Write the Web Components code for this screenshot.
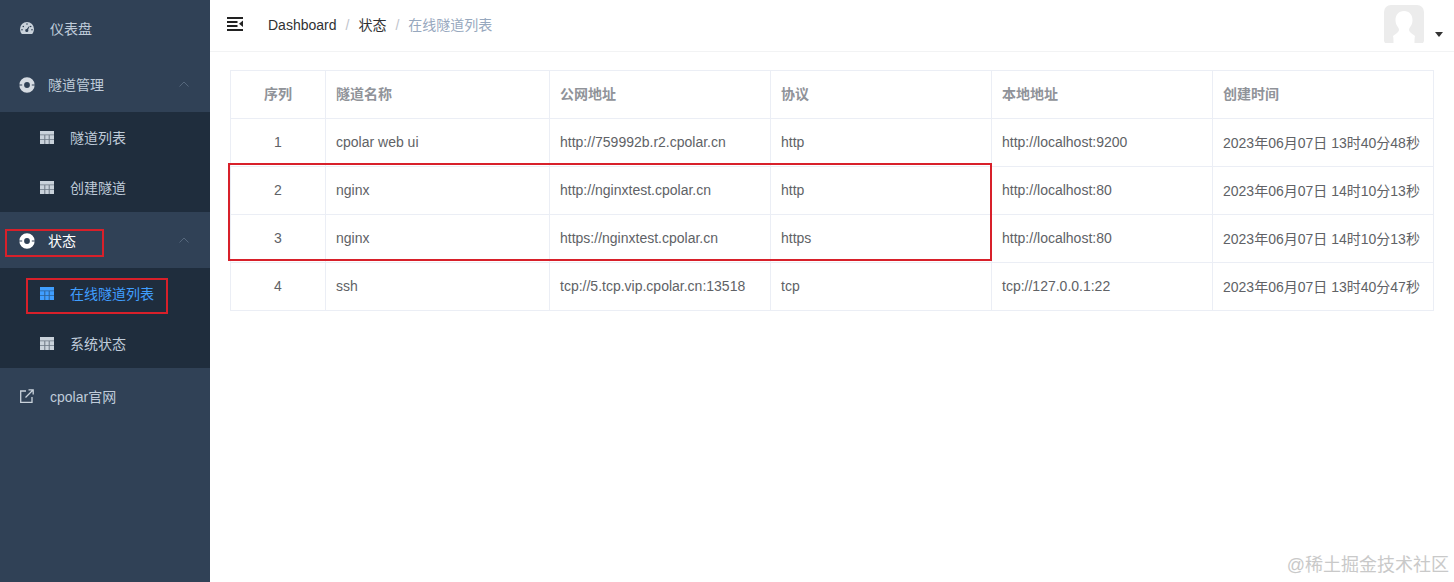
<!DOCTYPE html>
<html lang="zh">
<head>
<meta charset="utf-8">
<title>cpolar</title>
<style>
  html, body { margin: 0; height: 100%; background: #fff; }
  body { font-family: "Liberation Sans", "Noto Sans CJK SC", sans-serif; overflow: hidden; }
</style>
</head>
<body>
<app-shell>
  <side-bar slot="side">
    <side-item icon="gauge" label="仪表盘"></side-item>
    <side-group label="隧道管理">
      <side-item sub icon="grid" label="隧道列表"></side-item>
      <side-item sub icon="grid" label="创建隧道"></side-item>
    </side-group>
    <side-group label="状态" bright>
      <side-item sub active icon="grid" label="在线隧道列表"></side-item>
      <side-item sub icon="grid" label="系统状态"></side-item>
    </side-group>
    <side-item icon="link" label="cpolar官网"></side-item>
  </side-bar>
  <top-bar slot="top"></top-bar>
  <tunnel-table slot="main"></tunnel-table>
  <red-box slot="over" x="228" y="163" w="764" h="98"></red-box>
  <red-box slot="over" x="5" y="229" w="99" h="28"></red-box>
  <red-box slot="over" x="26" y="278" w="142" h="36"></red-box>
  <water-mark slot="over">@稀土掘金技术社区</water-mark>
</app-shell>

<script>
const ICONS = {
	gauge: `<svg width="14" height="12" viewBox="0 0 14 12"><path fill="currentColor" fill-rule="evenodd" d="M7 0a7 7 0 0 1 7 7c0 1.900-.6 3.500-1.600 4.700-.2.200-.4.300-.7.300H2.300c-.3 0-.5-.1-.7-.3A7.300 7.300 0 0 1 0 7a7 7 0 0 1 7-7zM3.300 3.700a.8.800 0 1 0 0 1.600.8.800 0 0 0 0-1.600zM6.200 2a.8.800 0 1 0 1.600 0 .8.800 0 0 0-1.600 0zM10.700 3.700a.8.800 0 1 0 0 1.600.8.800 0 0 0 0-1.600zM2 7a.8.800 0 1 0 0 1.600A.8.800 0 0 0 2 7zM12 7a.8.800 0 1 0 0 1.600.8.800 0 0 0 0-1.600zM9.200 4L6.800 7a1.500 1.500 0 1 0 1.300.8l1.500-3.600z"/></svg>`,
	ring: `<svg width="16" height="16" viewBox="0 0 16 16"><circle cx="8" cy="8" r="5.300" fill="none" stroke="currentColor" stroke-width="4.800"/><path d="M0 7.500h3.200M12.800 7.500H16M0 8.500h3.200M12.800 8.500H16" stroke="#304156" stroke-width=".5"/></svg>`,
	grid: `<svg width="14" height="13" viewBox="0 0 14 13"><path fill="currentColor" d="M0 0h14v13H0z"/><path fill="#1f2d3d" opacity=".55" d="M4.300 4h1v9h-1zM8.700 4h1v9h-1zM0 3.400h14v.8H0zM0 8.200h14v.8H0z"/></svg>`,
	link: `<svg width="14" height="14" viewBox="0 0 14 14" fill="none" stroke="currentColor" stroke-width="1.300"><path d="M6 2H.7v11.300H12V8"/><path d="M5.500 8.500L13 1M8.500.8h4.700v4.700"/></svg>`
};

class AppShell extends HTMLElement {
	constructor() {
		super();
		this.attachShadow({ mode: "open" }).innerHTML = `
		<style>
			:host { display: flex; position: relative; width: 100%; height: 582px; overflow: hidden; }
			.side { flex: 0 0 210px; }
			.right { flex: 1; min-width: 0; }
		</style>
		<div class="side"><slot name="side"></slot></div>
		<div class="right"><slot name="top"></slot><slot name="main"></slot></div>
		<slot name="over"></slot>`;
	}
}

class SideBar extends HTMLElement {
	constructor() {
		super();
		this.attachShadow({ mode: "open" }).innerHTML = `
		<style>
			:host { display: block; height: 582px; background: #304156; overflow: hidden; }
		</style>
		<slot></slot>`;
	}
}

class SideItem extends HTMLElement {
	constructor() {
		super();
		const sub = this.hasAttribute("sub");
		const active = this.hasAttribute("active");
		this.attachShadow({ mode: "open" }).innerHTML = `
		<style>
			:host { display: flex; align-items: center; box-sizing: border-box; font-size: 14px;
				height: ${sub ? 50 : 56}px; padding-left: ${sub ? 40 : 20}px;
				color: ${active ? "#409eff" : "#bfcbd9"}; background: ${sub ? "#1f2d3d" : "transparent"}; }
			.ic { flex: 0 0 30px; display: flex; align-items: center; color: ${active ? "#409eff" : "#c9d2db"}; }
			svg { display: block; }
		</style>
		<span class="ic">${ICONS[this.getAttribute("icon")]}</span>
		<span>${this.getAttribute("label")}</span>`;
	}
}

class SideGroup extends HTMLElement {
	constructor() {
		super();
		const bright = this.hasAttribute("bright");
		this.attachShadow({ mode: "open" }).innerHTML = `
		<style>
			:host { display: block; }
			.head { display: flex; align-items: center; height: 56px; box-sizing: border-box; padding: 0 21px 0 19px;
				font-size: 14px; color: ${bright ? "#fff" : "#bfcbd9"}; }
			.ic { flex: 0 0 29px; display: flex; margin-top: 2px; color: ${bright ? "#fff" : "#d5dbe2"}; }
			.label { flex: 1; }
			.arrow { display: block; }
		</style>
		<div class="head">
			<span class="ic">${ICONS.ring}</span>
			<span class="label">${this.getAttribute("label")}</span>
			<svg class="arrow" width="10" height="6" viewBox="0 0 10 6" fill="none" stroke="#55677c" stroke-width="1"><path d="M.5 5.500L5 1l4.500 4.500"/></svg>
		</div>
		<slot></slot>`;
	}
}

class TopBar extends HTMLElement {
	constructor() {
		super();
		this.attachShadow({ mode: "open" }).innerHTML = `
		<style>
			:host { display: flex; align-items: center; box-sizing: border-box; height: 52px; padding: 0 11px 2px 17px;
				border-bottom: 1px solid #f2f3f4; font-size: 14px; color: #303133; }
			.burger { display: block; margin: 0 25px 2px 0; }
			.crumbs { flex: 1; display: flex; align-items: baseline; margin-bottom: 2px; }
			.sep { color: #c0c4cc; margin: 0 9px; }
			.now { color: #97a8be; }
			.avatar { display: block; margin-top: -1px; }
			.caret { width: 0; height: 0; border: 4px solid transparent; border-top: 5px solid #333; border-bottom: 0; margin: 20px 0 0 11px; }
		</style>
		<svg class="burger" width="16" height="14" viewBox="0 0 16 14" fill="#222"><path d="M0 0h16v2H0zM0 4h10.500v2H0zM0 8h10.500v2H0zM0 12h16v2H0zM16 3.500v6.500l-4-3.200z"/></svg>
		<div class="crumbs">
			<span>Dashboard</span><span class="sep">/</span><span>状态</span><span class="sep">/</span><span class="now">在线隧道列表</span>
		</div>
		<svg class="avatar" width="40" height="38" viewBox="0 0 40 38"><path fill="#ececec" d="M7 0h26a7 7 0 0 1 7 7v29l-1 2H1l-1-2V7a7 7 0 0 1 7-7z"/><path fill="#fff" d="M20 6c5.500 0 8.500 4 8.500 9 0 3-1 5.500-3 8-1 1.500-.5 3.500 1.500 5l4 3c-.5 2-.5 4-.5 7H9.500c0-3 0-5-.5-7l4-3c2-1.500 2.500-3.500 1.500-5-2-2.500-3-5-3-8 0-5 3-9 8.500-9z"/></svg>
		<span class="caret"></span>`;
	}
}

const HEADS = ["序列", "隧道名称", "公网地址", "协议", "本地地址", "创建时间"];
const ROWS = [
	["1", "cpolar web ui", "http://759992b.r2.cpolar.cn", "http", "http://localhost:9200", "2023年06月07日 13时40分48秒"],
	["2", "nginx", "http://nginxtest.cpolar.cn", "http", "http://localhost:80", "2023年06月07日 14时10分13秒"],
	["3", "nginx", "https://nginxtest.cpolar.cn", "https", "http://localhost:80", "2023年06月07日 14时10分13秒"],
	["4", "ssh", "tcp://5.tcp.vip.cpolar.cn:13518", "tcp", "tcp://127.0.0.1:22", "2023年06月07日 13时40分47秒"]
];

class TunnelTable extends HTMLElement {
	constructor() {
		super();
		const cells = (row, tag) => row.map((text) => `<${tag}>${text}</${tag}>`).join("");
		this.attachShadow({ mode: "open" }).innerHTML = `
		<style>
			:host { display: block; padding: 18px 20px 0; font-size: 14px; color: #606266; }
			table { border-collapse: collapse; table-layout: fixed; width: 1203px; }
			th, td { border: 1px solid #ebeef5; height: 48px; padding: 0 10px 2px; text-align: left; box-sizing: border-box; white-space: nowrap; font-weight: normal; overflow: hidden; }
			th { color: #909399; font-weight: bold; padding-bottom: 4px; }
			th:first-child, td:first-child { text-align: center; }
		</style>
		<table>
			<colgroup><col style="width:95px"><col style="width:224px"><col style="width:221px"><col style="width:221px"><col style="width:221px"><col style="width:221px"></colgroup>
			<thead><tr>${cells(HEADS, "th")}</tr></thead>
			<tbody>${ROWS.map((r) => `<tr>${cells(r, "td")}</tr>`).join("")}</tbody>
		</table>`;
	}
}

class RedBox extends HTMLElement {
	constructor() {
		super();
		const a = (n) => this.getAttribute(n) + "px";
		this.attachShadow({ mode: "open" }).innerHTML = `
		<style>
			:host { position: absolute; left: ${a("x")}; top: ${a("y")}; width: ${a("w")}; height: ${a("h")};
				box-sizing: border-box; border: 2px solid #d8202a; pointer-events: none; }
		</style>`;
	}
}

class WaterMark extends HTMLElement {
	constructor() {
		super();
		this.attachShadow({ mode: "open" }).innerHTML = `
		<style>
			:host { position: absolute; right: 5px; bottom: 5px; font-size: 18px; line-height: 24px; color: #c9c9c9; white-space: nowrap; }
		</style>
		<slot></slot>`;
	}
}

customElements.define("app-shell", AppShell);
customElements.define("side-bar", SideBar);
customElements.define("side-item", SideItem);
customElements.define("side-group", SideGroup);
customElements.define("top-bar", TopBar);
customElements.define("tunnel-table", TunnelTable);
customElements.define("red-box", RedBox);
customElements.define("water-mark", WaterMark);
</script>
</body>
</html>
